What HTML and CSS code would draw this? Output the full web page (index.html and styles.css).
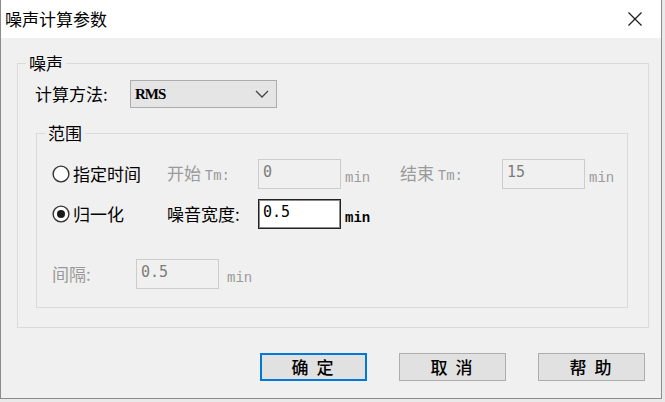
FILE: index.html
```html
<!doctype html>
<html lang="zh-CN">
  <head>
    <meta charset="UTF-8" />
    <title>噪声计算参数</title>
    <link rel="stylesheet" href="styles.css">
  </head>
  <body>
    <div class="dialog">
      <div class="titlebar">
        <span class="caption">噪声计算参数</span>
        <svg class="close" width="14" height="14" viewBox="0 0 14 14">
          <path d="M0.5 0.5 L13.5 13.5 M13.5 0.5 L0.5 13.5" stroke="#1a1a1a" stroke-width="1.2" fill="none" />
        </svg>
      </div>

      <div class="client">
        <fieldset class="group outer">
          <legend>噪声</legend>

          <div class="method">
            <span class="method-label">计算方法:</span>
            <div class="combo">
              <span class="combo-text">RMS</span>
              <svg width="14" height="8" viewBox="0 0 14 8">
                <path d="M1 1 L7 7 L13 1" stroke="#444" stroke-width="1.3" fill="none" />
              </svg>
            </div>
          </div>

          <fieldset class="group inner">
            <legend>范围</legend>

            <div class="row row1">
              <label class="radio">
                <svg width="18" height="18" viewBox="0 0 18 18">
                  <circle cx="9" cy="9" r="7.9" fill="#fff" stroke="#333" stroke-width="1.4" />
                </svg>
                <span>指定时间</span>
              </label>
              <span class="field-label disabled">开始 <span class="mono">Tm:</span></span>
              <input class="edit" type="text" value="0" disabled />
              <span class="unit disabled">min</span>
              <span class="field-label end disabled">结束 <span class="mono">Tm:</span></span>
              <input class="edit" type="text" value="15" disabled />
              <span class="unit last disabled">min</span>
            </div>

            <div class="row row2">
              <label class="radio">
                <svg width="18" height="18" viewBox="0 0 18 18">
                  <circle cx="9" cy="9" r="7.9" fill="#fff" stroke="#333" stroke-width="1.4" />
                  <circle cx="9" cy="9" r="4" fill="#1a1a1a" />
                </svg>
                <span>归一化</span>
              </label>
              <span class="field-label">噪音宽度:</span>
              <input class="edit active" type="text" value="0.5" />
              <span class="unit bold">min</span>
            </div>

            <div class="row row3">
              <span class="gap-label disabled">间隔:</span>
              <input class="edit" type="text" value="0.5" disabled />
              <span class="unit gap-unit disabled">min</span>
            </div>
          </fieldset>
        </fieldset>

        <div class="buttons">
          <button class="btn default">确 定</button>
          <button class="btn">取 消</button>
          <button class="btn">帮 助</button>
        </div>
      </div>
    </div>
  </body>
</html>
```

FILE: styles.css
```css
* {
  box-sizing: border-box;
}

html,
body {
  margin: 0;
  padding: 0;
}

body {
  background: #e9e9e9;
  font-family: "Noto Sans CJK SC", sans-serif;
  font-size: 17px;
  color: #000;
}

.dialog {
  width: 662px;
  height: 399px;
  border: 1px solid #8c8c8c;
  border-top: none;
  background: #f0f0f0;
  display: flex;
  flex-direction: column;
}

.titlebar {
  height: 38px;
  background: #fff;
  display: flex;
  align-items: center;
  justify-content: space-between;
  padding: 0 19px 0 4px;
}

.caption {
  line-height: 20px;
}

.client {
  flex: 1;
  display: flex;
  flex-direction: column;
  padding: 15px 0 0 16px;
}

/* group boxes */
.group {
  margin: 0;
  padding: 0;
  min-width: 0;
  border: 1px solid #dadada;
}

.group legend {
  margin-left: 8px;
  padding: 0 3px;
  line-height: 20px;
}

.outer {
  width: 632px;
  padding-bottom: 19px;
}

.method {
  display: flex;
  align-items: center;
  height: 28px;
  margin: 7px 0 0 17px;
}

.method-label {
  width: 95px;
  line-height: 20px;
}

.combo {
  width: 147px;
  height: 28px;
  border: 1px solid #adadad;
  background: #e5e5e5;
  display: flex;
  align-items: center;
  justify-content: space-between;
  padding: 0 7px 0 4px;
}

.combo-text {
  font-family: "Liberation Serif", serif;
  font-weight: bold;
  font-size: 15px;
  letter-spacing: -1px;
}

.inner {
  width: 592px;
  margin: 15px 0 0 18px;
  padding-bottom: 18px;
}

.row {
  display: flex;
  align-items: center;
  height: 30px;
  padding-left: 15px;
}

.row > * {
  flex-shrink: 0;
}

.row1 {
  margin-top: 16px;
}

.row2 {
  margin-top: 10px;
}

.row3 {
  margin-top: 30px;
}

.radio {
  width: 115px;
  display: flex;
  align-items: center;
  gap: 3px;
  line-height: 20px;
}

.field-label {
  width: 91px;
  line-height: 20px;
}

.field-label.end {
  width: 102px;
}

.gap-label {
  width: 84px;
  line-height: 20px;
}

.mono {
  font-family: "Liberation Mono", monospace;
  font-size: 14px;
}

.disabled {
  color: #9a9a9a;
}

.edit {
  width: 83px;
  height: 30px;
  margin: 0;
  padding: 0 0 5px 4px;
  border: 1px solid #cccccc;
  background: #f0f0f0;
  color: #7c7c7c;
  font-family: "DejaVu Sans Mono", monospace;
  font-size: 15px;
  outline: none;
}

.edit.active {
  border: 1px solid #222;
  box-shadow: inset 0 0 0 1px #8a8a8a;
  background: #fff;
  color: #000;
}

.unit {
  width: 59px;
  padding-left: 4px;
  margin-top: 8px;
  font-family: "Liberation Mono", monospace;
  font-size: 14px;
}

.unit.last {
  width: 36px;
}

.unit.bold {
  font-weight: bold;
}

.gap-unit {
  padding-left: 8px;
}

/* bottom buttons */
.buttons {
  display: flex;
  justify-content: flex-end;
  gap: 32px;
  margin-top: 25px;
  padding-right: 16px;
}

.btn {
  width: 107px;
  height: 28px;
  border: 1px solid #adadad;
  background: #e1e1e1;
  font-family: "Noto Sans CJK SC", sans-serif;
  font-size: 17px;
  font-weight: 500;
  letter-spacing: 2px;
  line-height: 20px;
  padding: 0;
  color: #000;
}

.btn.default {
  border-color: #0078d7;
  box-shadow: inset 0 0 0 1px #0078d7;
}
```
